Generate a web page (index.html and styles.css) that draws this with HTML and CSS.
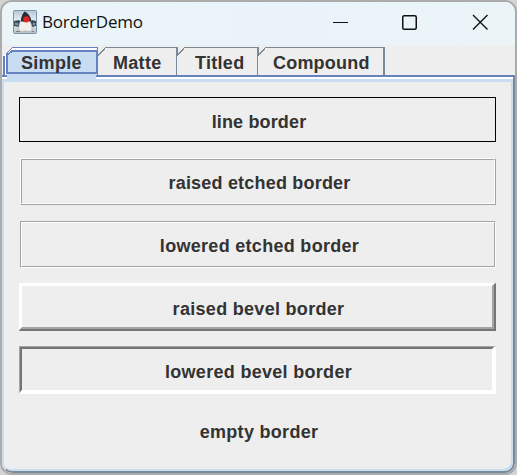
FILE: index.html
```html
<!DOCTYPE html>
<html lang="en">
<head>
<meta charset="utf-8">
<title>BorderDemo</title>
<link rel="stylesheet" href="styles.css">
</head>
<body>
<div class="window">
  <header class="titlebar">
    <svg class="app-icon" width="24" height="24" viewBox="0 0 24 24">
      <defs><linearGradient id="sky" x1="0" y1="0" x2="0" y2="1"><stop offset="0" stop-color="#b4c8da"/><stop offset=".5" stop-color="#edf1f3"/><stop offset="1" stop-color="#b9bec2"/></linearGradient></defs>
      <rect x=".5" y=".5" width="23" height="23" rx="1" fill="url(#sky)" stroke="#7895ae"/>
      <path d="M1 11l5-1 3 3-3 4-5-1zM23 11l-4-1-3 3 3 4 4-1z" fill="#3b4a52"/>
      <path d="M2 13.500l3 1M20 13.500l2 1" stroke="#77a0b8" stroke-width="2"/>
      <path d="M8.500 10c-2 2-4 8-2 11 3 1.500 4-.5 6 0 2 .5 6 1 6.500-1 .5-4-1-8-3.500-10z" fill="#f0f0ec" stroke="#a6a8a7" stroke-width=".7"/>
      <path d="M11.500 1.500c3 1 6.500 5 7 10-2-.5-7 .5-10.500 0-.5-3 1.500-8 3.500-10z" fill="#292e31"/>
      <circle cx="13.300" cy="9.300" r="3.100" fill="#de2529"/>
      <path d="M3 21.500h4M19 21.500h2" stroke="#7c8183"/>
    </svg>
    <h1 class="title">BorderDemo</h1>
    <svg class="controls" width="158" height="20" viewBox="0 0 158 20" fill="none" stroke="#111">
      <path d="M1 10.500h15"/>
      <rect x="70.750" y="3.750" width="13.500" height="13.500" rx="1.500" stroke-width="1.500"/>
      <path d="M141 3l14.500 14.500M155.500 3L141 17.500" stroke-width="1.400"/>
    </svg>
  </header>
  <nav class="tabs">
    <svg class="tab-lines" width="513" height="37" viewBox="2 45 513 37" shape-rendering="crispEdges">
      <path d="M2 75H515V77H2z" fill="#6382bf"/>
      <path d="M2 77H515V79H2z" fill="#fff"/>
      <path d="M4 79H513V82H4zM2 79h2v3h-2z" fill="#c8ddf2"/>
      <path d="M513 75h2v7h-2z" fill="#7a8a99"/>
      <path d="M4 75V55l8-7H97V75z" fill="#fff"/>
      <path d="M7 74H96V82H7z" fill="#c8ddf2"/>
      <path d="M7 73V55l5-4H97V73z" fill="#c8ddf2" stroke="#6382bf" stroke-width="2"/>
      <path d="M12 47.500H97.500V75M5.500 54.500L12 48" fill="none" stroke="#6382bf"/>
      <path d="M4 75V56" stroke="#6382bf" stroke-width="2"/>
      <g fill="none" stroke="#7a8a99">
        <path d="M105 47.500H177M176.500 47V75M184 47.500H258M257.500 47V75M265 47.500H384"/>
        <path d="M177.500 47V55M258.500 47V55"/>
        <path d="M384 47V75" stroke-width="2"/>
        <path d="M98 55.500L105 48.500M177 55.500L184 48.500M258 55.500L265 48.500"/>
      </g>
    </svg>
    <span class="tab tab-simple">Simple</span>
    <span class="tab tab-matte">Matte</span>
    <span class="tab tab-titled">Titled</span>
    <span class="tab tab-compound">Compound</span>
  </nav>
  <main class="panel">
    <div class="sample line"><span>line border</span></div>
    <div class="sample etched-raised"><div class="inner"><span>raised etched border</span></div></div>
    <div class="sample etched-lowered"><div class="inner"><span>lowered etched border</span></div></div>
    <div class="sample bevel-raised"><div class="inner"><span>raised bevel border</span></div></div>
    <div class="sample bevel-lowered"><div class="inner"><span>lowered bevel border</span></div></div>
    <div class="sample empty"><span>empty border</span></div>
  </main>
</div>
</body>
</html>
```
FILE: styles.css
```css
* { box-sizing: border-box; }
body { margin: 0; background: #d4d4d4; overflow: hidden; }
.window {
  width: 517px; height: 475px;
  display: flex; flex-direction: column;
  border: 2px solid #ababab; border-radius: 12px;
  background: #eee; overflow: hidden;
  font: bold 18px/22px "Liberation Sans", Arial, sans-serif;
  letter-spacing: .3px; color: #333;
}
.titlebar {
  height: 43px; flex: none;
  display: flex; align-items: center;
  padding: 0 0 3px 11px;
  background: linear-gradient(90deg, #ebf5f8, #eaf3fa 55%, #ebf5f8);
}
.title {
  margin: 0 0 0 5px; flex: 1;
  font: 400 17px/24px "Open Sans", sans-serif;
  letter-spacing: -.2px; color: #111;
}
.controls { margin: 0 25px 0 0; }
.tabs {
  height: 37px; flex: none;
  display: grid; grid-template-columns: 94px 80px 81px 127px;
  position: relative; white-space: nowrap;
}
.tab-lines { position: absolute; left: 0; top: 0; }
.tab { position: relative; padding-top: 7px; }
.tab-simple { padding-left: 19px; }
.tab-matte { padding-left: 17px; }
.tab-titled { padding-left: 19px; }
.tab-compound { padding-left: 16px; letter-spacing: .2px; }
.panel {
  flex: 1; display: grid;
  grid-template-rows: 45px 47px 47px 48px 48px 46px;
  row-gap: 15px; padding: 15px 15px 0;
  border-left: 2px solid #c8ddf2;
  border-right: 2px solid #7a8a99;
  border-bottom: 2px solid #7a8a99;
  box-shadow: inset -2px -2px #c8ddf2;
  border-bottom-left-radius: 10px;
  border-bottom-right-radius: 10px;
}
.sample { width: 477px; display: flex; align-items: center; justify-content: center; }
.sample span { padding-left: 3px; }
.inner { flex: 1; align-self: stretch; display: flex; align-items: center; justify-content: center; }
.line { border: 1px solid #000; padding-top: 5px; letter-spacing: .15px; }
.etched-raised, .etched-lowered { width: 476px; margin-left: 1px; margin-top: 1px; height: 47px; }
.etched-raised { letter-spacing: .2px; }
.etched-lowered { margin-top: 2px; }
.bevel-raised, .bevel-lowered, .empty { margin-top: 2px; }
.etched-raised { border: 1px solid; border-color: #fff #a3a3a3 #a3a3a3 #fff; }
.etched-raised .inner { border: 1px solid; border-color: #a3a3a3 #fff #fff #a3a3a3; padding-top: 2px; }
.etched-lowered { border: 1px solid; border-color: #a3a3a3 #fff #fff #a3a3a3; }
.etched-lowered .inner { border: 1px solid; border-color: #fff #a3a3a3 #a3a3a3 #fff; padding-top: 2px; }
.bevel-raised { height: 48px; border: solid; border-width: 1px 2px 2px 1px; border-color: #fff #757575 #757575 #fff; }
.bevel-raised .inner { border: 2px solid; border-color: #fff #a4a4a4 #a4a4a4 #fff; padding-top: 4px; }
.bevel-lowered { height: 48px; border: solid; border-width: 1px 2px 2px 1px; border-color: #a4a4a4 #fff #fff #a4a4a4; }
.bevel-lowered .inner { border: 2px solid; border-color: #757575 #fff #fff #757575; padding-top: 5px; }
.empty { height: 46px; }
```
